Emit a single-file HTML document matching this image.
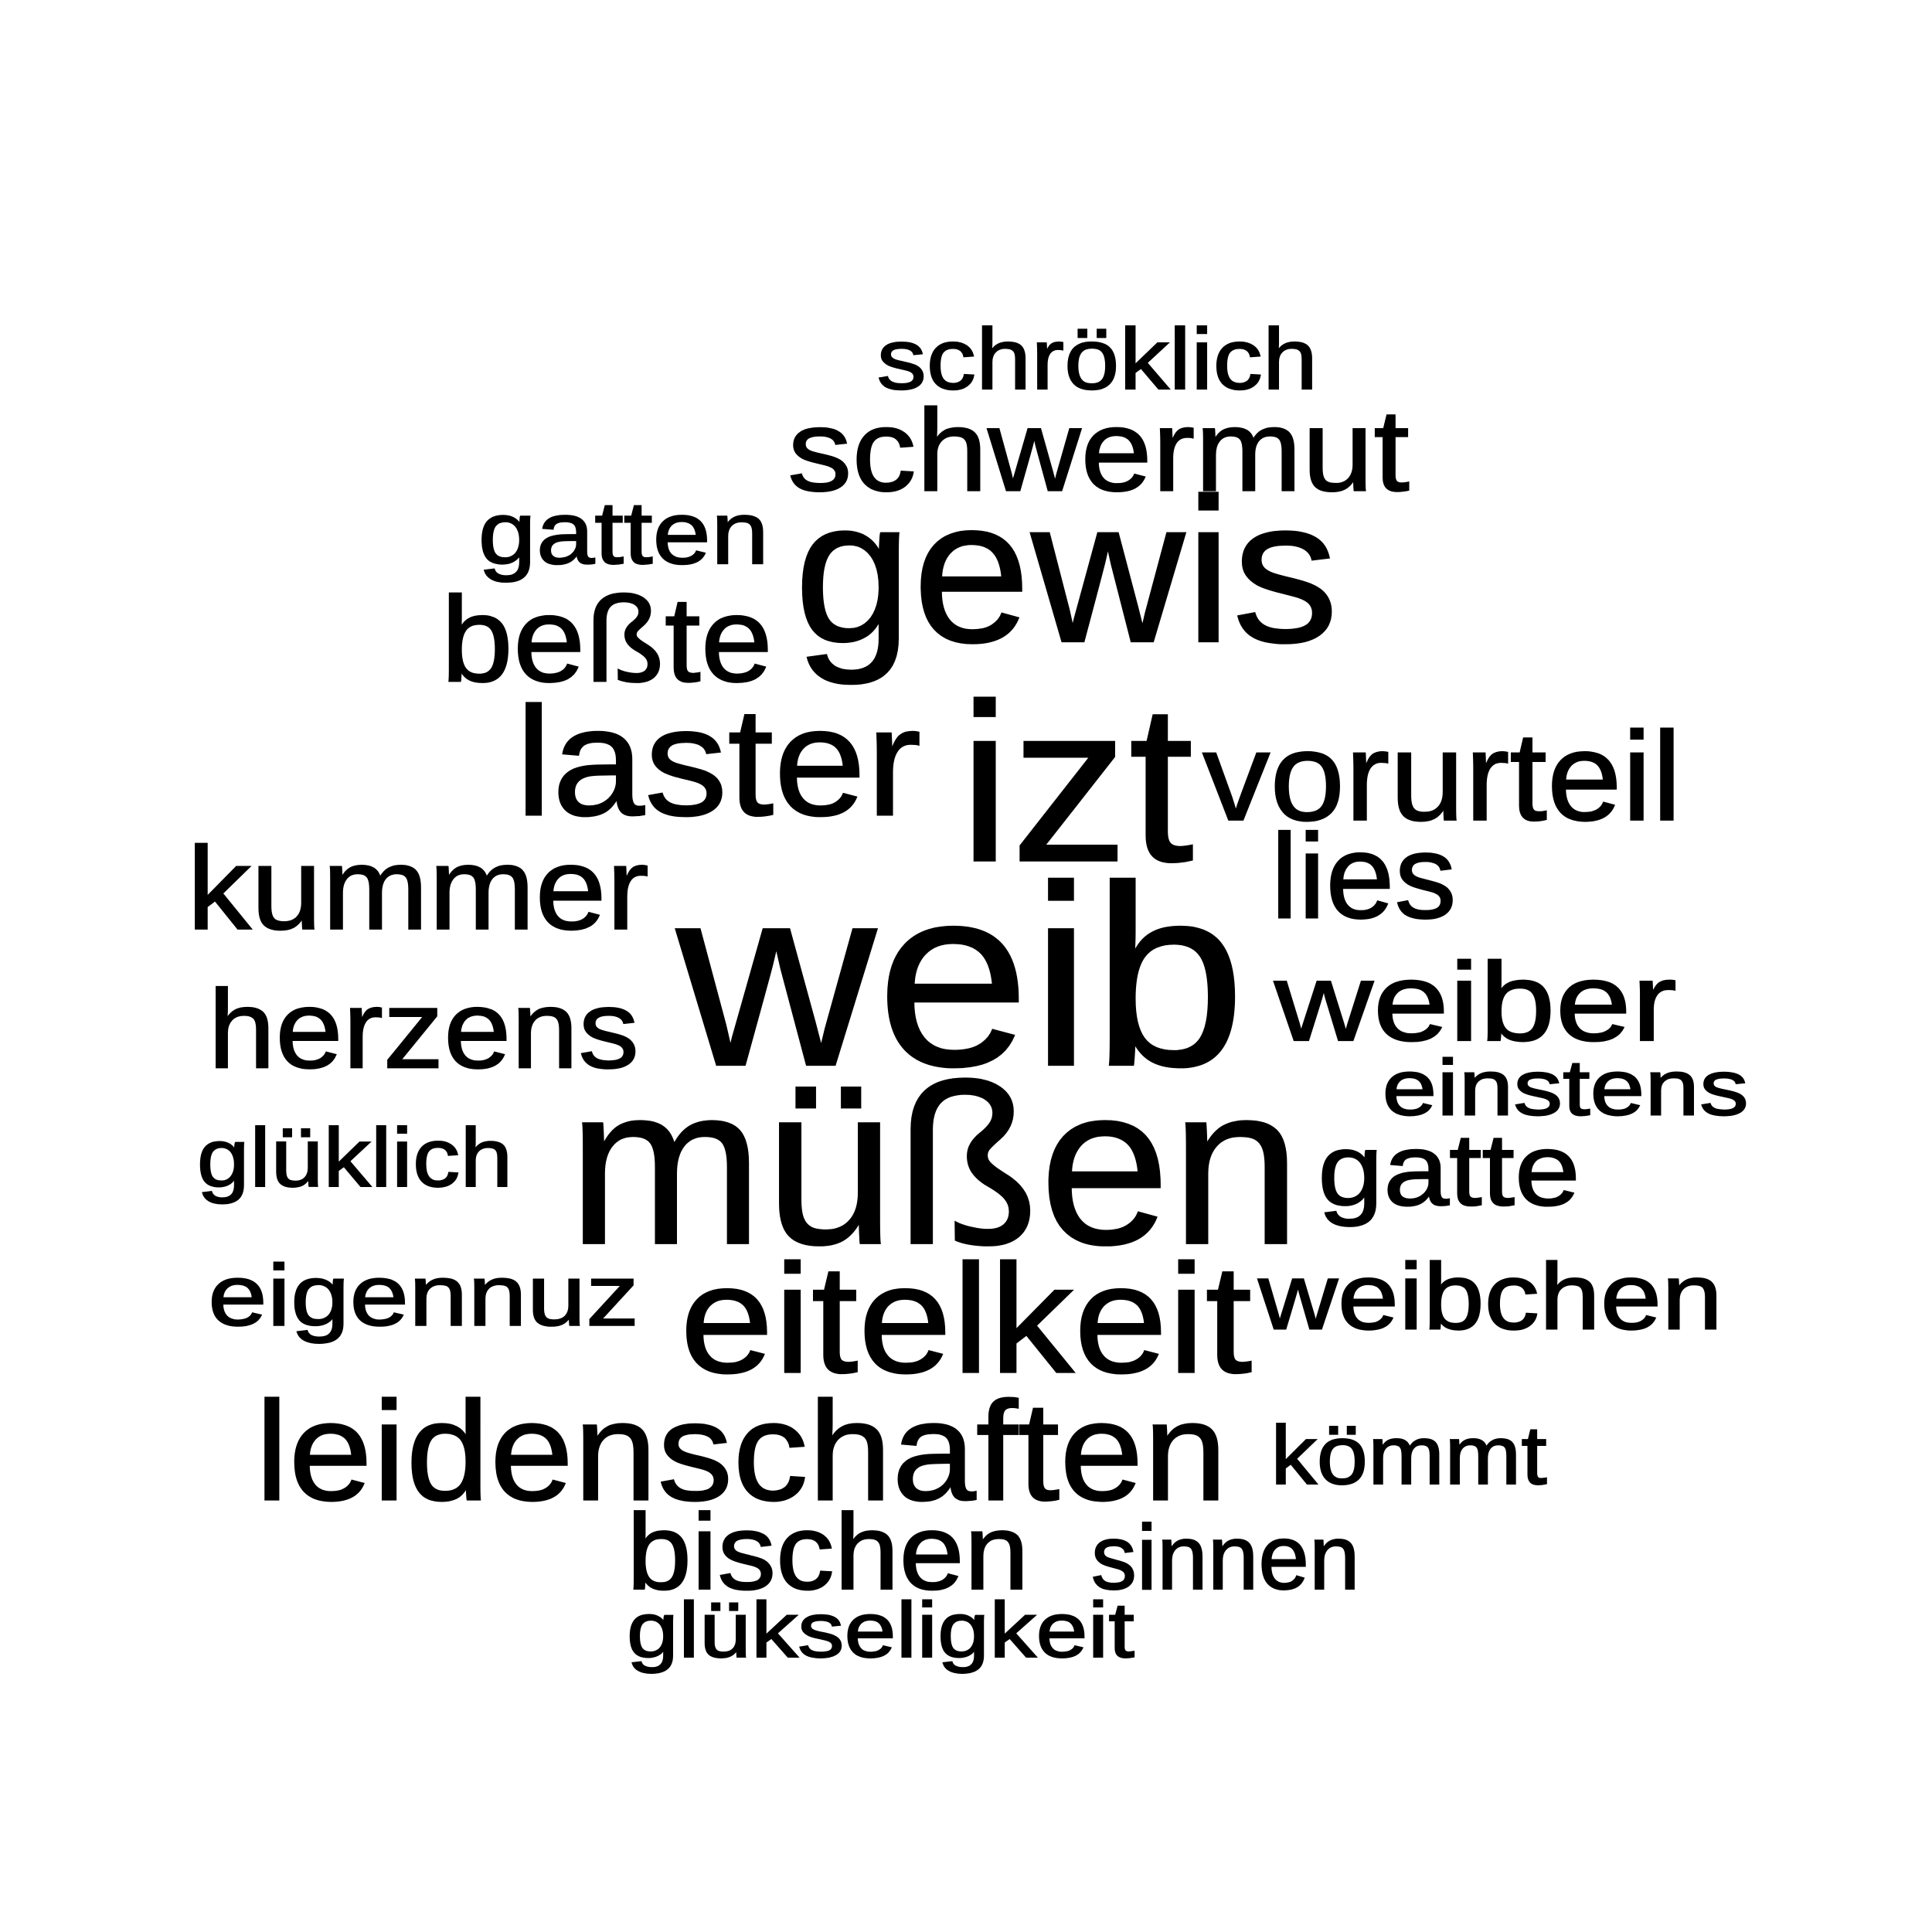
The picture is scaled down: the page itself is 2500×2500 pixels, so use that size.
<!DOCTYPE html>
<html><head><meta charset="utf-8"><style>
html,body{margin:0;padding:0;background:#fff;}
svg{display:block;}
text{font-family:"Liberation Sans",Arial,sans-serif;fill:#000;stroke:#000;stroke-width:1.2px;}
</style></head><body>
<svg width="2500" height="2500" viewBox="0 0 1560 1560" xmlns="http://www.w3.org/2000/svg">
<rect width="1560" height="1560" fill="#fff"/>
<g transform="translate(-4,-2)">
<text x="712" y="316" font-size="70" textLength="356" lengthAdjust="spacingAndGlyphs">schröklich</text>
<text x="640" y="398" font-size="94" textLength="502" lengthAdjust="spacingAndGlyphs">schwermut</text>
<text x="390" y="457" font-size="72" textLength="235" lengthAdjust="spacingAndGlyphs">gatten</text>
<text x="645" y="520" font-size="166" textLength="440" lengthAdjust="spacingAndGlyphs">gewis</text>
<text x="360" y="552" font-size="98" textLength="268" lengthAdjust="spacingAndGlyphs">beßte</text>
<text x="420" y="660" font-size="125" textLength="328" lengthAdjust="spacingAndGlyphs">laster</text>
<text x="778" y="697" font-size="182" textLength="190" lengthAdjust="spacingAndGlyphs">izt</text>
<text x="975" y="664" font-size="102" textLength="387" lengthAdjust="spacingAndGlyphs">vorurteil</text>
<text x="1030" y="743" font-size="97" textLength="150" lengthAdjust="spacingAndGlyphs">lies</text>
<text x="155" y="752" font-size="95" textLength="373" lengthAdjust="spacingAndGlyphs">kummer</text>
<text x="550" y="862" font-size="208" textLength="460" lengthAdjust="spacingAndGlyphs">weib</text>
<text x="172" y="864" font-size="90" textLength="348" lengthAdjust="spacingAndGlyphs">herzens</text>
<text x="1033" y="842" font-size="90" textLength="325" lengthAdjust="spacingAndGlyphs">weiber</text>
<text x="1120" y="902" font-size="64" textLength="296" lengthAdjust="spacingAndGlyphs">einstens</text>
<text x="163" y="960" font-size="67" textLength="255" lengthAdjust="spacingAndGlyphs">glüklich</text>
<text x="462" y="1006" font-size="184" textLength="593" lengthAdjust="spacingAndGlyphs">müßen</text>
<text x="1068" y="975" font-size="83" textLength="212" lengthAdjust="spacingAndGlyphs">gatte</text>
<text x="172" y="1072" font-size="70" textLength="348" lengthAdjust="spacingAndGlyphs">eigennuz</text>
<text x="553" y="1110" font-size="125" textLength="462" lengthAdjust="spacingAndGlyphs">eitelkeit</text>
<text x="1020" y="1075" font-size="76" textLength="375" lengthAdjust="spacingAndGlyphs">weibchen</text>
<text x="210" y="1213" font-size="114" textLength="785" lengthAdjust="spacingAndGlyphs">leidenschaften</text>
<text x="1030" y="1200" font-size="67" textLength="223" lengthAdjust="spacingAndGlyphs">kömmt</text>
<text x="510" y="1285" font-size="87" textLength="325" lengthAdjust="spacingAndGlyphs">bischen</text>
<text x="885" y="1285" font-size="74" textLength="217" lengthAdjust="spacingAndGlyphs">sinnen</text>
<text x="510" y="1340" font-size="63" textLength="410" lengthAdjust="spacingAndGlyphs">glükseligkeit</text>
</g>
</svg>
</body></html>
